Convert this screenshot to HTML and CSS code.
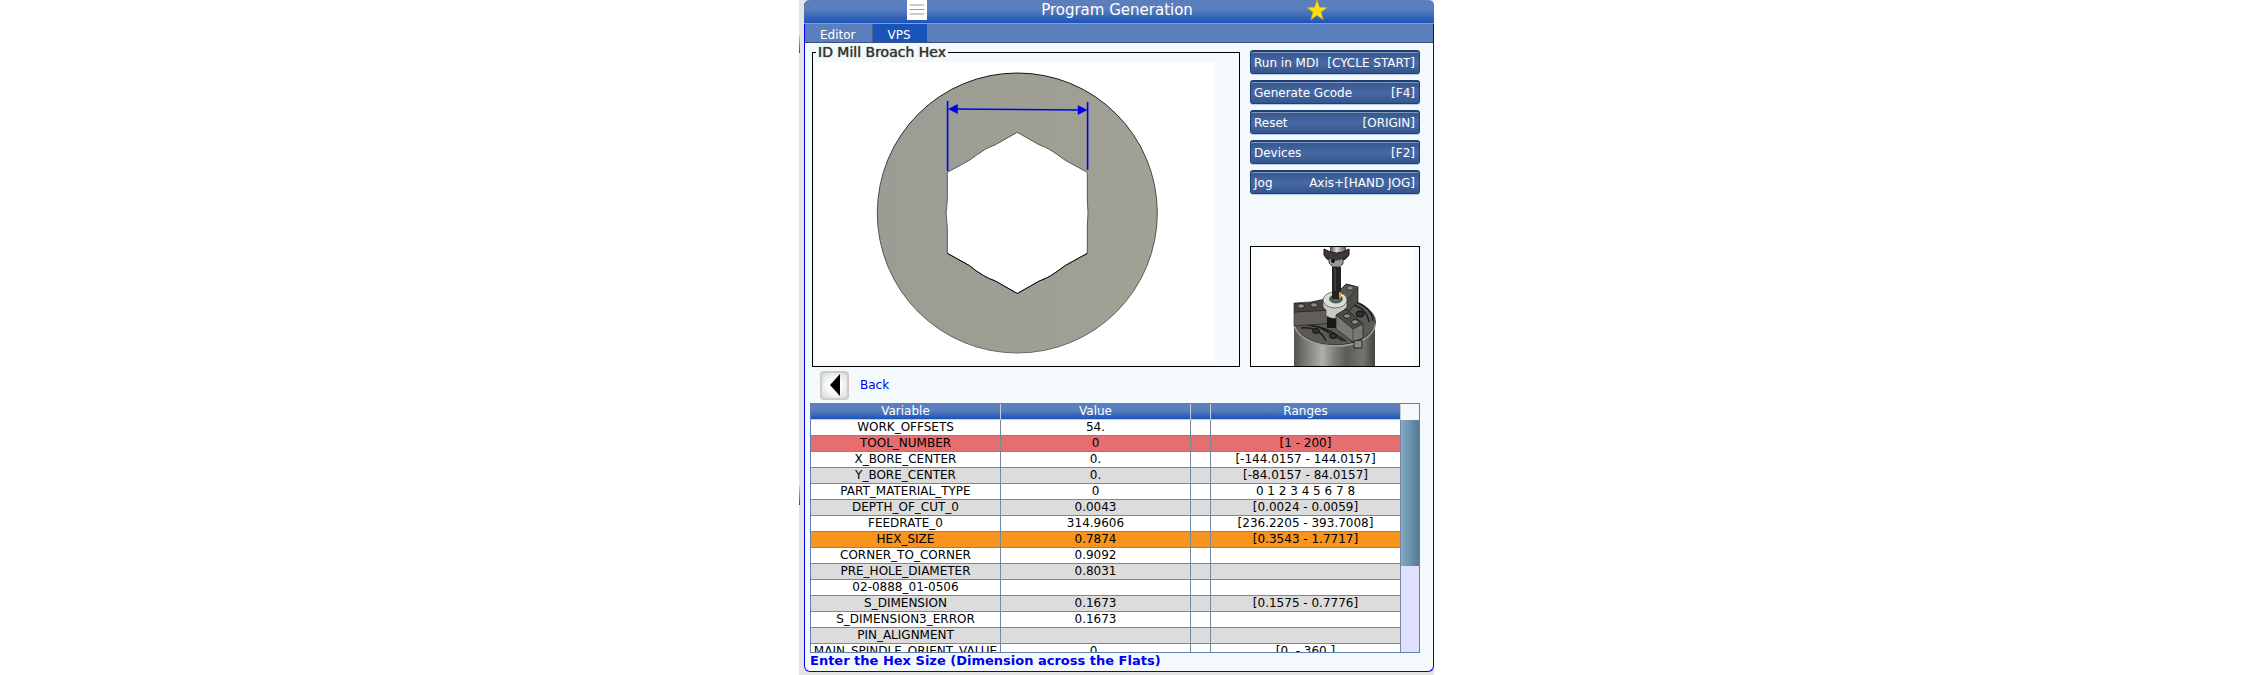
FILE: index.html
```html
<!DOCTYPE html>
<html lang="en">
<head>
    <meta charset="UTF-8">
    <meta name="viewport" content="width=device-width, initial-scale=1.0">
    <title>Program Generation</title>
    <link rel="stylesheet" href="styles.css">
</head>
<body>
    <div class="screen">
        <main class="window">
            <header class="title-bar">
                <button class="menu-btn" type="button" aria-label="Menu">
                    <svg viewBox="0 0 20 20" width="20" height="20">
                        <path d="M3 5h14M3 9.500h14M3 14h14" stroke="#999" stroke-width="1.200" stroke-linecap="round"/>
                    </svg>
                </button>
                <h1>Program Generation</h1>
                <button class="star-btn" type="button" aria-label="Favorite">
                    <svg viewBox="0 0 20 20" width="20" height="20">
                        <path d="M10 0l2.500 7.300 7.500.2-6 4.600 2.200 7.700L10 15.200l-6.200 4.600L6 12.100 0 7.500l7.500-.2z" fill="#ffe011" stroke="#d9a514" stroke-width=".6"/>
                    </svg>
                </button>
            </header>

            <nav class="tabs">
                <a href="#editor" class="tab">Editor</a>
                <a href="#vps" class="tab active">VPS</a>
            </nav>

            <div class="content">
                <section class="top">
                    <fieldset class="drawing">
                        <legend>ID Mill Broach Hex</legend>
                        <svg class="part" viewBox="815 62 400 300" width="400" height="300">
                            <defs>
                                <linearGradient id="steel" x1="0" y1="0" x2="1" y2="0">
                                    <stop offset="0" stop-color="#9a9d94"/>
                                    <stop offset="1" stop-color="#a1a195"/>
                                </linearGradient>
                                <linearGradient id="edge" x1="0" y1="0" x2="0" y2="1">
                                    <stop offset="0" stop-color="#111"/>
                                    <stop offset=".4" stop-color="#4a4a48"/>
                                    <stop offset="1" stop-color="#666"/>
                                </linearGradient>
                            </defs>
                            <rect x="815" y="62" width="400" height="300" fill="#fff"/>
                            <circle cx="1017.300" cy="213" r="140" fill="url(#steel)" stroke="url(#edge)" stroke-width="1"/>
                            <path d="M1017.300 132.300l22 12.500q7 2.500 10 4.500 8 5 16 11l22 12v27q1.400 13 0 28v26l-22 12.200q-8 6-15 10.500-3 2-11 5l-22 12.500-22-12.500q-8-3-11-5-8-4.500-15-10.500l-22-12.200v-26q-2.400-14 0-28v-27l22-12q8-6 16-11 3-2 10-4.500z" fill="#fff" stroke="#555" stroke-width="1"/>
                            <path d="M947.300 253.300l22 12.200q7 6 15 10.500 3 2 11 5l22 12.500 22-12.500q8-3 11-5 7-4.500 15-10.500l22-12.200" fill="none" stroke="#111" stroke-width="1"/>
                            <g stroke="#00e" stroke-width="1.600" fill="#00e">
                                <path d="M947.600 101v70M1087.600 102v68M952 109l132 1"/>
                                <path d="M948.500 109l9-4.500v9zM1087 110l-9-4.500v9z" stroke-width=".5"/>
                            </g>
                        </svg>
                    </fieldset>

                    <aside class="side">
                        <div class="actions">
                            <button class="action" type="button"><span>Run in MDI</span><span>[CYCLE START]</span></button>
                            <button class="action" type="button"><span>Generate Gcode</span><span>[F4]</span></button>
                            <button class="action" type="button"><span>Reset</span><span>[ORIGIN]</span></button>
                            <button class="action" type="button"><span>Devices</span><span>[F2]</span></button>
                            <button class="action" type="button"><span>Jog</span><span>Axis+[HAND JOG]</span></button>
                        </div>
                        <div class="preview">
                            <svg viewBox="0 0 168 119" width="168" height="119">
                                <defs>
                                    <linearGradient id="chuck" x1="0" y1="0" x2="1" y2="0">
                                        <stop offset="0" stop-color="#55534e"/>
                                        <stop offset=".15" stop-color="#7d7b75"/>
                                        <stop offset=".35" stop-color="#b1afa9"/>
                                        <stop offset=".5" stop-color="#807e78"/>
                                        <stop offset=".65" stop-color="#5c5a55"/>
                                        <stop offset=".85" stop-color="#77756f"/>
                                        <stop offset="1" stop-color="#45433f"/>
                                    </linearGradient>
                                    <linearGradient id="shank" x1="0" y1="0" x2="1" y2="0">
                                        <stop offset="0" stop-color="#444"/>
                                        <stop offset=".4" stop-color="#ddd"/>
                                        <stop offset="1" stop-color="#555"/>
                                    </linearGradient>
                                </defs>
                                <rect width="163" height="119" fill="#fff"/>
                                <!-- chuck body -->
                                <path d="M43 75v44h81V75z" fill="url(#chuck)"/>
                                <ellipse cx="84" cy="75" rx="40.500" ry="23" fill="#5b5955" stroke="#222" stroke-width=".8"/>
                                <path d="M43.500 79c4 12 20 20 41 20 24 0 38-10 40-22" fill="none" stroke="#a09e98" stroke-width="1.500"/>
                                <path d="M50 81q18-2 25 13M57 78q14 2 24 7l14 9M66 79l26 15M99 57q17 4 19 18M102 54q19 6 20 20" fill="none" stroke="#1b1b1b" stroke-width="1.400"/>
                                <g fill="#33312f" stroke="#111">
                                    <ellipse cx="65" cy="84" rx="3.500" ry="2.500"/>
                                    <ellipse cx="82" cy="89" rx="3.500" ry="2.500"/>
                                    <ellipse cx="109" cy="67" rx="4" ry="3"/>
                                </g>
                                <!-- jaws -->
                                <path d="M43 65l42-3v14l-42 3z" fill="#625f5a" stroke="#1b1b1b" stroke-width=".6"/>
                                <path d="M43 56l17-1 14-3 11 2v9l-42 2z" fill="#454340" stroke="#1b1b1b" stroke-width=".6"/>
                                <path d="M86 46l9-9 12 3v15l-12 12-9-7z" fill="#4d4b48" stroke="#1b1b1b" stroke-width=".7"/>
                                <path d="M86 46l9-9 12 3-10 12z" fill="#5a5855" stroke="#1b1b1b" stroke-width=".5"/>
                                <!-- tool holder and bar -->
                                <path d="M79 0h16v5H79z" fill="url(#shank)"/>
                                <path d="M73 2q13 8 25 0v6q-3 5-8 6H81q-6-1-8-6z" fill="#3a3937" stroke="#111"/>
                                <path d="M78 11q8 4 14 0v6l-4 3h-6l-4-4z" fill="#9a9996" stroke="#222" stroke-width=".8"/>
                                <circle cx="82" cy="14" r="2" fill="#111"/>
                                <path d="M81 20h9v27h-9z" fill="#242321"/>
                                <path d="M84 21v26" stroke="#555"/>
                                <!-- work piece -->
                                <path d="M76 68h9v13h-9z" fill="#171717"/>
                                <path d="M72 53v7l3 3v6q9 5 18 0v-6l3-3v-7z" fill="#c9c8c1" stroke="#333" stroke-width=".6"/>
                                <ellipse cx="84" cy="53" rx="12" ry="8" fill="#dddbd4" stroke="#444" stroke-width=".7"/>
                                <ellipse cx="85" cy="52" rx="6.500" ry="4" fill="#4d6955" stroke="#222" stroke-width=".6"/>
                                <path d="M81 44h7v8h-7z" fill="#242321"/>
                                <path d="M88 45h2v6h-2z" fill="#d8a03a"/>
                                <path d="M85 68l10-6 17 15v14l-10 4-17-13z" fill="#7b7974" stroke="#1b1b1b" stroke-width=".7"/>
                                <path d="M85 68l10-6 17 15-10 5z" fill="#4c4a47" stroke="#1b1b1b" stroke-width=".6"/>
                                <path d="M102 82v13" stroke="#333" stroke-width=".7"/>
                                <g fill="#8e8c87" stroke="#111" stroke-width=".8">
                                    <ellipse cx="50" cy="59" rx="3.500" ry="2.300"/>
                                    <ellipse cx="63" cy="58" rx="3.500" ry="2.300"/>
                                    <ellipse cx="99" cy="41" rx="3.500" ry="2.300"/>
                                    <ellipse cx="96" cy="69" rx="3.500" ry="2.300"/>
                                    <ellipse cx="104" cy="75" rx="3.500" ry="2.300"/>
                                </g>
                                <path d="M103 94v7h8v-8z" fill="#8b8983" stroke="#222"/>
                            </svg>
                        </div>
                    </aside>
                </section>

                <div class="back-row">
                    <button class="back-btn" type="button" id="back" aria-label="Back">
                        <svg viewBox="0 0 10 22" width="10" height="22"><path d="M10 0v22L0 11z"/></svg>
                    </button>
                    <label for="back">Back</label>
                </div>

                <div class="table-box">
                    <table class="vars">
                        <colgroup>
                            <col class="col-name">
                            <col class="col-value">
                            <col class="col-flag">
                            <col class="col-range">
                        </colgroup>
                        <thead>
                            <tr><th>Variable</th><th>Value</th><th></th><th>Ranges</th></tr>
                        </thead>
                        <tbody>
                            <tr><td>WORK_OFFSETS</td><td>54.</td><td></td><td></td></tr>
                            <tr class="error"><td>TOOL_NUMBER</td><td>0</td><td></td><td>[1 - 200]</td></tr>
                            <tr><td>X_BORE_CENTER</td><td>0.</td><td></td><td>[-144.0157 - 144.0157]</td></tr>
                            <tr><td>Y_BORE_CENTER</td><td>0.</td><td></td><td>[-84.0157 - 84.0157]</td></tr>
                            <tr><td>PART_MATERIAL_TYPE</td><td>0</td><td></td><td>0 1 2 3 4 5 6 7 8</td></tr>
                            <tr><td>DEPTH_OF_CUT_0</td><td>0.0043</td><td></td><td>[0.0024 - 0.0059]</td></tr>
                            <tr><td>FEEDRATE_0</td><td>314.9606</td><td></td><td>[236.2205 - 393.7008]</td></tr>
                            <tr class="selected"><td>HEX_SIZE</td><td>0.7874</td><td></td><td>[0.3543 - 1.7717]</td></tr>
                            <tr><td>CORNER_TO_CORNER</td><td>0.9092</td><td></td><td></td></tr>
                            <tr><td>PRE_HOLE_DIAMETER</td><td>0.8031</td><td></td><td></td></tr>
                            <tr><td>02-0888_01-0506</td><td></td><td></td><td></td></tr>
                            <tr><td>S_DIMENSION</td><td>0.1673</td><td></td><td>[0.1575 - 0.7776]</td></tr>
                            <tr><td>S_DIMENSION3_ERROR</td><td>0.1673</td><td></td><td></td></tr>
                            <tr><td>PIN_ALIGNMENT</td><td></td><td></td><td></td></tr>
                            <tr><td>MAIN_SPINDLE_ORIENT_VALUE</td><td>0.</td><td></td><td>[0. - 360.]</td></tr>
                        </tbody>
                    </table>
                    <div class="scrollbar"><div class="thumb"></div></div>
                </div>

                <p class="hint">Enter the Hex Size (Dimension across the Flats)</p>
            </div>
        </main>
    </div>
</body>
</html>
```
FILE: styles.css
```css
* {
    box-sizing: border-box;
}

body {
    margin: 0;
    background-color: #fff;
    font-family: "DejaVu Sans", sans-serif;
    font-size: 12px;
    color: #000;
}

button {
    font: inherit;
    padding: 0;
    border: none;
    cursor: pointer;
}

svg {
    display: block;
}

.screen {
    max-width: 654px;
    margin: 0 auto;
    padding: 0 0 3px 5px;
    border-right: 19px solid #fff;
    background:
        linear-gradient(#ccc, #444) 0 35px / 1px 18px no-repeat,
        linear-gradient(#ccc, #444) 0 486px / 1px 19px no-repeat,
        #e4e4e4;
}

.window {
    border: 1px solid #0000ee;
    border-top: none;
    border-radius: 6px;
    background-color: #f4fafb;
}

.title-bar {
    display: flex;
    align-items: flex-start;
    height: 24px;
    margin: 0 -1px;
    padding: 0 107px 0 103px;
    background: linear-gradient(#5b7fbc 40%, #1b54b8);
    border-bottom: 1px solid #6aa5f5;
    border-radius: 6px 6px 0 0;
    color: #fff;
}

.title-bar h1 {
    flex: 1;
    margin: 0;
    font-size: 15px;
    font-weight: normal;
    line-height: 20px;
    text-align: center;
}

.menu-btn {
    background-color: #fff;
}

.star-btn {
    background: none;
}

.tabs {
    display: flex;
    height: 19px;
    background-color: #5b7fbc;
    border-bottom: 1px solid #33528c;
}

.tab {
    padding: 0 16px 0 15px;
    line-height: 22px;
    height: 18px;
    color: #fff;
    text-decoration: none;
    border-right: 1px solid #4a6396;
}

.tab.active {
    background-color: #1b54b8;
    border-right: none;
}

.content {
    padding: 3px 13px 2px 5px;
}

.top {
    display: flex;
    gap: 10px;
    padding-left: 2px;
}

.drawing {
    flex: 1;
    min-width: 0;
    margin: 0;
    padding: 4px 2px;
    border: 1px solid #000;
}

.drawing legend {
    margin-left: 1px;
    padding: 0 2px;
    font-size: 14px;
    line-height: 12px;
    color: #333;
    text-shadow: 0 0 1px #333;
}

.part {
    max-width: 100%;
}

.side {
    display: flex;
    flex-direction: column;
    justify-content: space-between;
    width: 170px;
    padding-top: 4px;
}

.actions {
    display: flex;
    flex-direction: column;
    gap: 6px;
}

.action {
    display: flex;
    justify-content: space-between;
    align-items: center;
    height: 24px;
    padding: 0 4px 0 3px;
    border: 1px solid #1d3f78;
    border-top-width: 2px;
    border-radius: 3px;
    background: linear-gradient(#33578f, #4768a3 50%, #35568c);
    box-shadow: inset 0 1px #8497ba, 0 1px #b9cce6;
    color: #fff;
}

.preview {
    border: 1px solid #000;
    overflow: hidden;
}

.back-row {
    display: flex;
    align-items: center;
    gap: 11px;
    height: 36px;
    padding-left: 10px;
    color: #0000ee;
}

.back-btn {
    display: flex;
    align-items: center;
    justify-content: center;
    width: 29px;
    height: 29px;
    border: 2px solid #ccc;
    border-radius: 4px;
    background: radial-gradient(#fafafa 40%, #d8d8d8);
}

.table-box {
    display: flex;
    height: 250px;
    border: 1px solid #5b7fbc;
    overflow: hidden;
}

.vars {
    flex: 1;
    width: 100%;
    height: 256px;
    table-layout: fixed;
    border-collapse: separate;
    border-spacing: 0;
    text-align: center;
}

.col-flag {
    width: 20px;
}

.vars th,
.vars td {
    height: 16px;
    padding: 0;
    font-weight: normal;
    line-height: 15px;
    white-space: nowrap;
    border-right: 1px solid #75889c;
    border-bottom: 1px solid #75889c;
}

.vars th {
    background: linear-gradient(#5b7fbc 40%, #1b54b8);
    border-right-color: #ccc;
    border-bottom-color: #ccc;
    color: #fff;
}

.vars tbody tr {
    background-color: #fff;
}

.vars tbody tr:nth-child(even) {
    background-color: #dcdcdc;
}

.vars tbody tr.error {
    background-color: #e66e6e;
}

.vars tbody tr.selected {
    background-color: #f8931d;
}

.scrollbar {
    flex-shrink: 0;
    width: 18px;
    margin-top: 16px;
    background-color: #dfdffe;
}

.thumb {
    height: 146px;
    background: linear-gradient(90deg, #82abc6, #557a97);
}

.hint {
    margin: 0;
    font-size: 13px;
    font-weight: bold;
    line-height: 16px;
    color: #0000ee;
}
```
